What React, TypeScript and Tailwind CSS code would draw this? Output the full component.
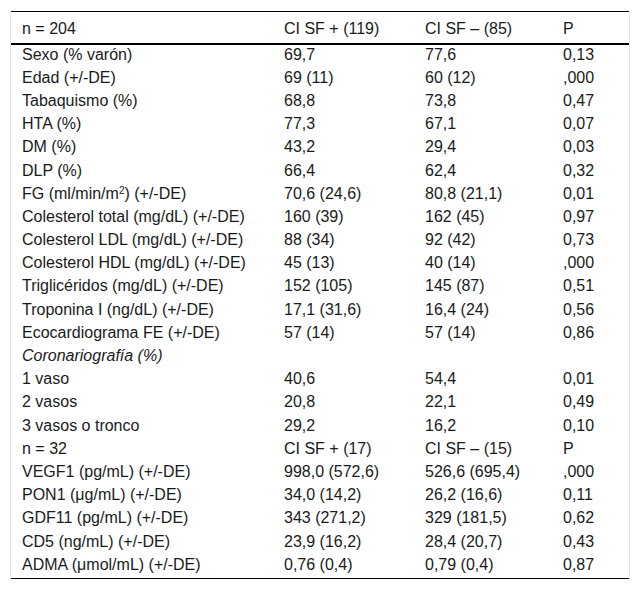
import React from 'react';

type Row = { label: React.ReactNode; a?: string; b?: string; p?: string; italic?: boolean };

const ROWS: Row[] = [
  { label: 'Sexo (% varón)', a: '69,7', b: '77,6', p: '0,13' },
  { label: 'Edad (+/-DE)', a: '69 (11)', b: '60 (12)', p: ',000' },
  { label: 'Tabaquismo (%)', a: '68,8', b: '73,8', p: '0,47' },
  { label: 'HTA (%)', a: '77,3', b: '67,1', p: '0,07' },
  { label: 'DM (%)', a: '43,2', b: '29,4', p: '0,03' },
  { label: 'DLP (%)', a: '66,4', b: '62,4', p: '0,32' },
  {
    label: (
      <>
        FG (ml/min/m<sup className="text-[10px]">2</sup>) (+/-DE)
      </>
    ),
    a: '70,6 (24,6)',
    b: '80,8 (21,1)',
    p: '0,01',
  },
  { label: 'Colesterol total (mg/dL) (+/-DE)', a: '160 (39)', b: '162 (45)', p: '0,97' },
  { label: 'Colesterol LDL (mg/dL) (+/-DE)', a: '88 (34)', b: '92 (42)', p: '0,73' },
  { label: 'Colesterol HDL (mg/dL) (+/-DE)', a: '45 (13)', b: '40 (14)', p: ',000' },
  { label: 'Triglicéridos (mg/dL) (+/-DE)', a: '152 (105)', b: '145 (87)', p: '0,51' },
  { label: 'Troponina I (ng/dL) (+/-DE)', a: '17,1 (31,6)', b: '16,4 (24)', p: '0,56' },
  { label: 'Ecocardiograma FE (+/-DE)', a: '57 (14)', b: '57 (14)', p: '0,86' },
  { label: 'Coronariografía (%)', italic: true },
  { label: '1 vaso', a: '40,6', b: '54,4', p: '0,01' },
  { label: '2 vasos', a: '20,8', b: '22,1', p: '0,49' },
  { label: '3 vasos o tronco', a: '29,2', b: '16,2', p: '0,10' },
  { label: 'n = 32', a: 'CI SF + (17)', b: 'CI SF – (15)', p: 'P' },
  { label: 'VEGF1 (pg/mL) (+/-DE)', a: '998,0 (572,6)', b: '526,6 (695,4)', p: ',000' },
  { label: 'PON1 (μg/mL) (+/-DE)', a: '34,0 (14,2)', b: '26,2 (16,6)', p: '0,11' },
  { label: 'GDF11 (pg/mL) (+/-DE)', a: '343 (271,2)', b: '329 (181,5)', p: '0,62' },
  { label: 'CD5 (ng/mL) (+/-DE)', a: '23,9 (16,2)', b: '28,4 (20,7)', p: '0,43' },
  { label: 'ADMA (μmol/mL) (+/-DE)', a: '0,76 (0,4)', b: '0,79 (0,4)', p: '0,87' },
];

const cell = 'pl-[11px] whitespace-nowrap';

export default function App() {
  return (
    <div className="bg-white w-[640px] h-[591px] pt-[11px] px-[10px] font-['Liberation_Sans'] text-[16px] leading-[18px] text-[#1a1a1a]">
      <div className="border-x border-[#e4e4e4]">
        <div className="border-t border-black border-b-2 h-[34px] flex items-center pt-[3px]">
          <div className={`${cell} w-[262px]`}>n = 204</div>
          <div className={`${cell} w-[141px]`}>CI SF + (119)</div>
          <div className={`${cell} w-[138px]`}>CI SF – (85)</div>
          <div className={`${cell} flex-1`}>P</div>
        </div>
        <div className="border-b border-black">
          {ROWS.map((r, i) => (
            <div key={i} className="h-[23.2px] flex items-center pb-[4px]">
              <div className={`${cell} w-[262px] ${r.italic ? 'italic' : ''}`}>{r.label}</div>
              <div className={`${cell} w-[141px]`}>{r.a}</div>
              <div className={`${cell} w-[138px]`}>{r.b}</div>
              <div className={`${cell} flex-1`}>{r.p}</div>
            </div>
          ))}
        </div>
      </div>
    </div>
  );
}
